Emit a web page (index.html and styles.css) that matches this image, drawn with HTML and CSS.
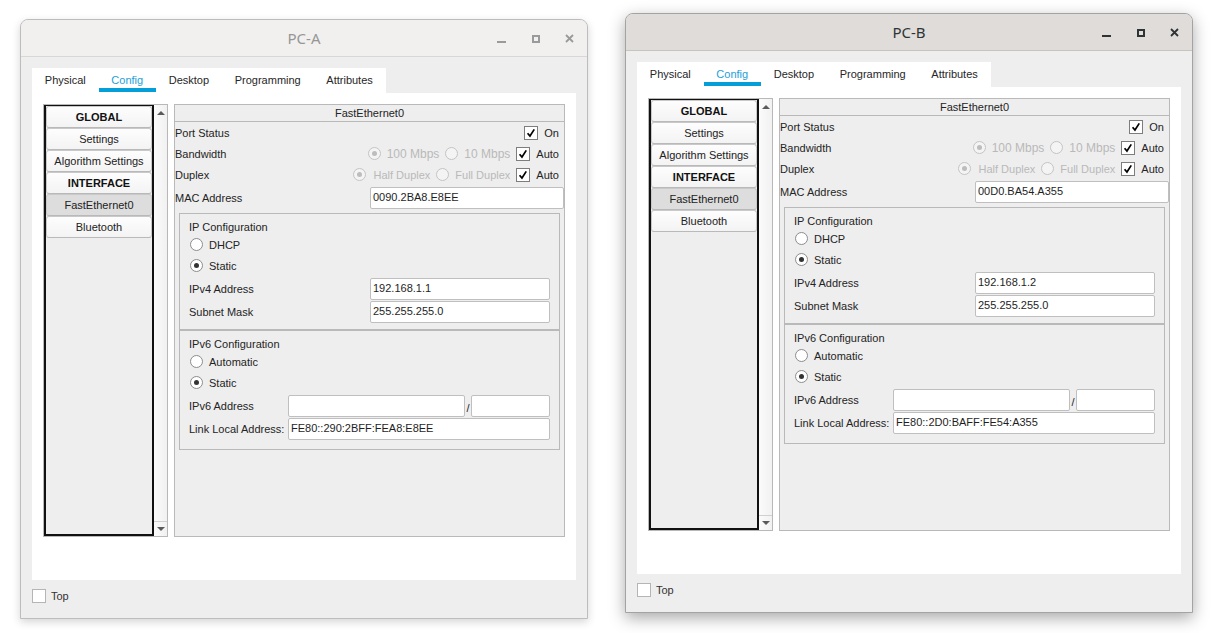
FILE: index.html
```html
<!DOCTYPE html>
<html>
<head>
<meta charset="utf-8">
<link rel="stylesheet" href="styles.css">
</head>
<body>
<div class="window inactive win-a">
  <div class="titlebar">
    <span class="title">PC-A</span>
    <div class="controls">
      <span class="ctl ctl-min"></span>
      <span class="ctl ctl-max"></span>
      <svg class="ctl ctl-close" viewBox="0 0 9 9" width="9" height="9"><path d="M1 1 L8 8 M8 1 L1 8"/></svg>
    </div>
  </div>
  <div class="body">
    <div class="tabs">
      <div class="tab">Physical</div>
      <div class="tab active">Config</div>
      <div class="tab">Desktop</div>
      <div class="tab">Programming</div>
      <div class="tab">Attributes</div>
    </div>
    <div class="content">
      <div class="listwidget">
        <div class="list">
          <div class="item bold">GLOBAL</div>
          <div class="item">Settings</div>
          <div class="item">Algorithm Settings</div>
          <div class="item bold">INTERFACE</div>
          <div class="item sel">FastEthernet0</div>
          <div class="item">Bluetooth</div>
        </div>
        <div class="scrollbar">
          <div class="sb-btn"><span class="tri-up"></span></div>
          <div class="sb-track"></div>
          <div class="sb-btn down"><span class="tri-down"></span></div>
        </div>
      </div>
      <div class="panel">
        <div class="panel-head">FastEthernet0</div>
        <div class="prow"><span>Port Status</span>
          <span class="opts"><span class="cb"><svg viewBox="0 0 14 14" width="12" height="12"><path d="M3 7.2 L5.8 10.6 L10.8 2.8"/></svg></span><span class="optlabel">On</span></span></div>
        <div class="prow"><span>Bandwidth</span>
          <span class="opts"><span class="radio dis on"></span><span class="dtext big">100 Mbps</span><span class="radio dis"></span><span class="dtext big">10 Mbps</span><span class="cb"><svg viewBox="0 0 14 14" width="12" height="12"><path d="M3 7.2 L5.8 10.6 L10.8 2.8"/></svg></span><span class="optlabel">Auto</span></span></div>
        <div class="prow"><span>Duplex</span>
          <span class="opts"><span class="radio dis on"></span><span class="dtext first">Half Duplex</span><span class="radio dis"></span><span class="dtext">Full Duplex</span><span class="cb"><svg viewBox="0 0 14 14" width="12" height="12"><path d="M3 7.2 L5.8 10.6 L10.8 2.8"/></svg></span><span class="optlabel">Auto</span></span></div>
        <div class="prow mac"><span>MAC Address</span><span class="field w-mac">0090.2BA8.E8EE</span></div>
        <div class="group g4">
          <div class="gtitle">IP Configuration</div>
          <div class="rrow"><span class="radio"></span>DHCP</div>
          <div class="rrow"><span class="radio on"></span>Static</div>
          <div class="frow first"><span class="flabel">IPv4 Address</span><span class="field w-ip">192.168.1.1</span></div>
          <div class="frow"><span class="flabel">Subnet Mask</span><span class="field w-ip">255.255.255.0</span></div>
        </div>
        <div class="group g6">
          <div class="gtitle">IPv6 Configuration</div>
          <div class="rrow"><span class="radio"></span>Automatic</div>
          <div class="rrow"><span class="radio on"></span>Static</div>
          <div class="frow first"><span class="flabel narrow">IPv6 Address</span><span class="field w-v6"></span><span class="slash">/</span><span class="field w-pre"></span></div>
          <div class="frow"><span class="flabel narrow">Link Local Address:</span><span class="field w-ll">FE80::290:2BFF:FEA8:E8EE</span></div>
        </div>
      </div>
    </div>
    <div class="footer"><span class="cb light"></span><span>Top</span></div>
  </div>
</div>

<div class="window active win-b">
  <div class="titlebar">
    <span class="title">PC-B</span>
    <div class="controls">
      <span class="ctl ctl-min"></span>
      <span class="ctl ctl-max"></span>
      <svg class="ctl ctl-close" viewBox="0 0 9 9" width="9" height="9"><path d="M1 1 L8 8 M8 1 L1 8"/></svg>
    </div>
  </div>
  <div class="body">
    <div class="tabs">
      <div class="tab">Physical</div>
      <div class="tab active">Config</div>
      <div class="tab">Desktop</div>
      <div class="tab">Programming</div>
      <div class="tab">Attributes</div>
    </div>
    <div class="content">
      <div class="listwidget">
        <div class="list">
          <div class="item bold">GLOBAL</div>
          <div class="item">Settings</div>
          <div class="item">Algorithm Settings</div>
          <div class="item bold">INTERFACE</div>
          <div class="item sel">FastEthernet0</div>
          <div class="item">Bluetooth</div>
        </div>
        <div class="scrollbar">
          <div class="sb-btn"><span class="tri-up"></span></div>
          <div class="sb-track"></div>
          <div class="sb-btn down"><span class="tri-down"></span></div>
        </div>
      </div>
      <div class="panel">
        <div class="panel-head">FastEthernet0</div>
        <div class="prow"><span>Port Status</span>
          <span class="opts"><span class="cb"><svg viewBox="0 0 14 14" width="12" height="12"><path d="M3 7.2 L5.8 10.6 L10.8 2.8"/></svg></span><span class="optlabel">On</span></span></div>
        <div class="prow"><span>Bandwidth</span>
          <span class="opts"><span class="radio dis on"></span><span class="dtext big">100 Mbps</span><span class="radio dis"></span><span class="dtext big">10 Mbps</span><span class="cb"><svg viewBox="0 0 14 14" width="12" height="12"><path d="M3 7.2 L5.8 10.6 L10.8 2.8"/></svg></span><span class="optlabel">Auto</span></span></div>
        <div class="prow"><span>Duplex</span>
          <span class="opts"><span class="radio dis on"></span><span class="dtext first">Half Duplex</span><span class="radio dis"></span><span class="dtext">Full Duplex</span><span class="cb"><svg viewBox="0 0 14 14" width="12" height="12"><path d="M3 7.2 L5.8 10.6 L10.8 2.8"/></svg></span><span class="optlabel">Auto</span></span></div>
        <div class="prow mac"><span>MAC Address</span><span class="field w-mac">00D0.BA54.A355</span></div>
        <div class="group g4">
          <div class="gtitle">IP Configuration</div>
          <div class="rrow"><span class="radio"></span>DHCP</div>
          <div class="rrow"><span class="radio on"></span>Static</div>
          <div class="frow first"><span class="flabel">IPv4 Address</span><span class="field w-ip">192.168.1.2</span></div>
          <div class="frow"><span class="flabel">Subnet Mask</span><span class="field w-ip">255.255.255.0</span></div>
        </div>
        <div class="group g6">
          <div class="gtitle">IPv6 Configuration</div>
          <div class="rrow"><span class="radio"></span>Automatic</div>
          <div class="rrow"><span class="radio on"></span>Static</div>
          <div class="frow first"><span class="flabel narrow">IPv6 Address</span><span class="field w-v6"></span><span class="slash">/</span><span class="field w-pre"></span></div>
          <div class="frow"><span class="flabel narrow">Link Local Address:</span><span class="field w-ll">FE80::2D0:BAFF:FE54:A355</span></div>
        </div>
      </div>
    </div>
    <div class="footer"><span class="cb light"></span><span>Top</span></div>
  </div>
</div>
</body>
</html>
```

FILE: styles.css
```css
* { box-sizing: border-box; }
html, body { margin: 0; padding: 0; background: #ffffff; }
body {
  width: 1212px;
  height: 633px;
  position: relative;
  overflow: hidden;
  font-family: "Liberation Sans", Arial, sans-serif;
  font-size: 11px;
  color: #242424;
}

/* windows on the desktop */
.window {
  position: absolute;
  width: 568px;
  height: 600px;
  border: 1px solid #bdbdbd;
  border-radius: 8px 8px 0 0;
  background: #eeeeee;
  display: flex;
  flex-direction: column;
}
.win-a { left: 20px; top: 19px; box-shadow: 0 3px 9px rgba(0,0,0,0.17); }
.win-b { left: 625px; top: 13px; border-color: #a3a3a3; box-shadow: 0 5px 16px rgba(0,0,0,0.34); }

.titlebar {
  height: 37px;
  flex: none;
  display: grid;
  grid-template-columns: 1fr auto 1fr;
  align-items: center;
  border-bottom: 1px solid #d8d7d6;
  border-radius: 7px 7px 0 0;
  background: #f1f0ef;
}
.title {
  grid-column: 2;
  font-family: "Noto Sans", "DejaVu Sans", sans-serif;
  font-size: 15px;
  color: #969696;
}
.controls {
  grid-column: 3;
  justify-self: end;
  display: flex;
  align-items: center;
  gap: 25px;
  padding-right: 13px;
  padding-top: 1px;
}
.ctl { display: block; width: 9px; height: 9px; position: relative; }
.ctl-min::after {
  content: "";
  position: absolute;
  left: 0; right: 0; bottom: 0;
  height: 2px;
  background: #9a9a9a;
}
.ctl-max { border: 2px solid #9a9a9a; width: 8px; height: 8px; margin-left: 1px; }
.ctl-close path { stroke: #9a9a9a; stroke-width: 1.8; fill: none; }

.active .titlebar { background: #dfdcd9; border-bottom-color: #c7c4c0; }
.active .title { color: #2e3436; }
.active .ctl-min::after { background: #2e3436; }
.active .ctl-max { border-color: #2e3436; }
.active .ctl-close path { stroke: #2e3436; }

.body {
  flex: 1;
  padding: 11px 11px 0;
  display: flex;
  flex-direction: column;
}

/* tabs */
.tabs {
  display: flex;
  align-self: flex-start;
  background: #ffffff;
  height: 25px;
}
.tab {
  height: 24px;
  padding: 5px 12.8px 1px;
  line-height: 14px;
  border-bottom: 4px solid transparent;
  color: #262626;
}
.tab.active { color: #1ea0d8; border-bottom-color: #049fd9; }

.content {
  background: #ffffff;
  height: 487px;
  padding: 11px;
  display: flex;
  align-items: flex-start;
  gap: 6px;
}

/* left list */
.listwidget {
  width: 125px;
  height: 433px;
  border: 1px solid #b8b8b8;
  display: flex;
}
.list {
  width: 110px;
  height: 100%;
  border: 2px solid #111111;
  border-top-width: 1px;
  background: #eeeeee;
}
.item {
  height: 22px;
  border: 1px solid #c9c9c9;
  border-bottom-color: #b9b9b9;
  border-radius: 3px;
  background: linear-gradient(#fdfdfd, #f3f3f3);
  text-align: center;
  line-height: 20px;
  color: #222;
  white-space: nowrap;
}
.item.bold { font-weight: bold; color: #111; }
.item.sel { background: #dddddd; }
.scrollbar {
  width: 13px;
  display: flex;
  flex-direction: column;
  background: linear-gradient(90deg, #fbfbfb, #f1f1f1);
}
.sb-btn {
  height: 15px;
  display: flex;
  align-items: center;
  justify-content: center;
}
.sb-btn.down { border-top: 1px solid #d0d0d0; }
.sb-track { flex: 1; }
.tri-up {
  width: 0; height: 0;
  border-left: 4px solid transparent;
  border-right: 4px solid transparent;
  border-bottom: 4px solid #5a5a5a;
}
.tri-down {
  width: 0; height: 0;
  border-left: 4px solid transparent;
  border-right: 4px solid transparent;
  border-top: 4px solid #5a5a5a;
}

/* right panel */
.panel {
  flex: 1;
  height: 433px;
  border: 1px solid #b9b9b9;
  background: #eeeeee;
}
.panel-head {
  height: 17px;
  border-bottom: 1px solid #b9b9b9;
  text-align: center;
  line-height: 16px;
}
.prow {
  height: 21px;
  display: flex;
  align-items: center;
  padding-right: 5px;
}
.prow.mac { height: 22px; margin-top: 2px; padding-right: 0; }
.opts { margin-left: auto; display: flex; align-items: center; }
.dtext { color: #b9b9b9; margin-left: 6px; margin-right: 6px; }
.dtext.big { font-size: 12px; }
.dtext.first { margin-left: 7px; }
.optlabel { margin-left: 6px; }

.cb {
  width: 14px;
  height: 14px;
  border: 1px solid #7d7d7d;
  background: #ffffff;
  display: flex;
  align-items: center;
  justify-content: center;
  flex: none;
}
.cb path { stroke: #000; stroke-width: 2; fill: none; }
.cb.light { border-color: #b5b5b5; }

.radio {
  width: 13px;
  height: 13px;
  border: 1px solid #8c8c8c;
  border-radius: 50%;
  background: #ffffff;
  display: flex;
  align-items: center;
  justify-content: center;
  flex: none;
}
.radio.on::after {
  content: "";
  width: 5px;
  height: 5px;
  border-radius: 50%;
  background: #333333;
}
.radio.dis { border-color: #c4c4c4; background: #f4f4f4; }
.radio.dis.on::after { background: #bdbdbd; }

.field {
  height: 22px;
  border: 1px solid #bfbfbf;
  border-radius: 2px;
  background: #ffffff;
  padding: 0 2px;
  line-height: 19px;
  white-space: nowrap;
  flex: none;
  color: #1e1e1e;
}
.w-mac { width: 194px; margin-left: auto; }
.w-ip { width: 180px; }
.w-v6 { width: 177px; }
.w-pre { width: 79px; }
.w-ll { width: 262px; }
.slash { width: 6px; text-align: center; flex: none; padding-top: 3px; }

.group {
  margin: 0 4px;
  border: 1px solid #b9b9b9;
  padding: 6px 9px;
}
.group.g4 { margin-top: 4px; }
.group.g6 { padding-bottom: 9px; }
.gtitle { line-height: 14px; }
.rrow {
  height: 21px;
  display: flex;
  align-items: center;
  gap: 6px;
  padding-left: 1px;
}
.frow {
  height: 22px;
  margin-top: 1px;
  display: flex;
  align-items: center;
}
.frow.first { margin-top: 2px; }
.frow .flabel { padding-bottom: 1px; }
.flabel { width: 181px; flex: none; white-space: nowrap; }
.flabel.narrow { width: 99px; }

.footer {
  margin-top: 9px;
  height: 14px;
  display: flex;
  align-items: center;
  gap: 5px;
  color: #333333;
}
```
